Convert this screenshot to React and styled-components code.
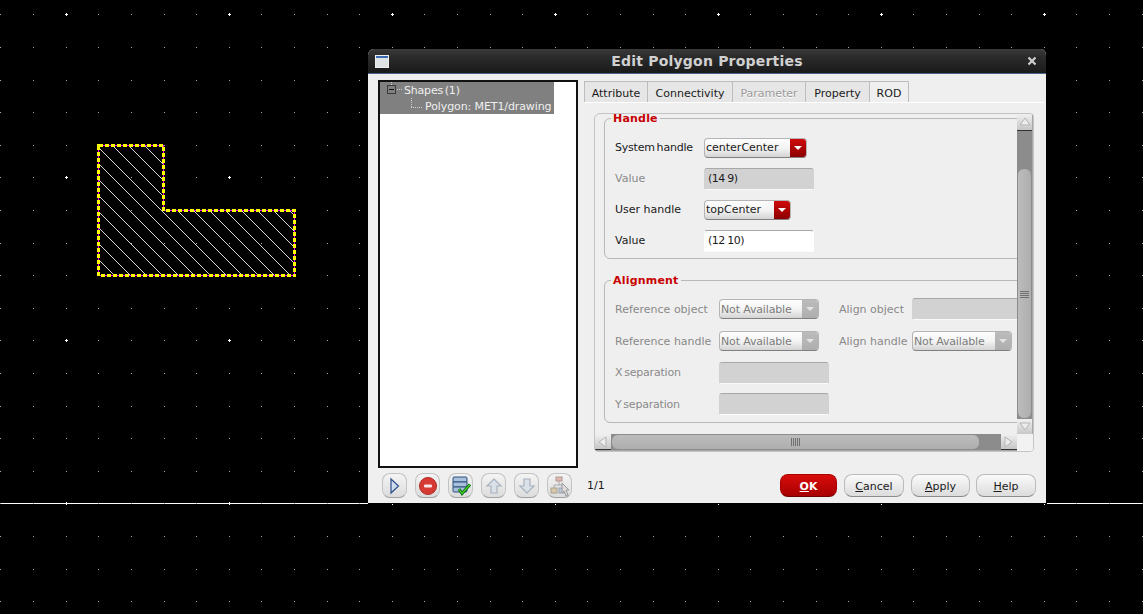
import React from 'react';
import styled, {createGlobalStyle, css} from 'styled-components';

const GlobalStyle = createGlobalStyle`
    html, body {
        margin: 0;
        padding: 0;
        background: #000;
    }
`;

const tightText = css`
    letter-spacing: -0.2px;
    word-spacing: -1.5px;
`;

const Stage = styled.div`
    position: relative;
    width: 1143px;
    height: 614px;
    overflow: hidden;
    background: #000;
    font-family: "DejaVu Sans", sans-serif;
    font-size: 11px;
    color: #1a1a1a;
`;

const CanvasSvg = styled.svg`
    position: absolute;
    left: 0;
    top: 0;
`;

const Dialog = styled.div`
    position: absolute;
    left: 368px;
    top: 49px;
    width: 679px;
    height: 455px;
    box-sizing: border-box;
    display: flex;
    flex-direction: column;
    background: #efefef;
    border-bottom: 1px solid #000;
    border-right: 1px solid #000;
    border-radius: 6px 6px 0 0;
    overflow: hidden;
`;

const TitleBar = styled.div`
    height: 24px;
    flex: none;
    display: flex;
    align-items: center;
    padding: 0 9px 0 7px;
    background: linear-gradient(#3a3a3a, #2c2c2c 30%, #1a1a1a);
    border-bottom: 1px solid #49648c;
    box-sizing: content-box;
`;

const TitleText = styled.div`
    flex: 1;
    text-align: center;
    font-size: 14px;
    font-weight: bold;
    letter-spacing: 0.2px;
    color: #d0d0d0;
    padding-right: 2px;
`;

const Body = styled.div`
    flex: 1;
    display: flex;
    padding: 7px 0 0 10px;
    min-height: 0;
`;

const TreePanel = styled.div`
    width: 200px;
    height: 388px;
    margin-top: -1px;
    flex: none;
    box-sizing: border-box;
    background: #fff;
    border: 2px solid #111;
`;

const TreeSelection = styled.div`
    width: 174px;
    background: #808080;
    color: #efefef;
`;

const TreeRow = styled.div`
    height: 16px;
    display: flex;
    align-items: center;
    padding-left: ${p => p.$indent}px;
    white-space: pre;
    letter-spacing: -0.1px;
    ${p => p.$tight && tightText}
`;

const TreeMark = styled.svg`
    flex: none;
    margin-right: ${p => p.$gap}px;
`;

const RightColumn = styled.div`
    margin-left: 6px;
    width: 460px;
    flex: none;
`;

const TabBar = styled.div`
    display: flex;
    height: 21px;
`;

const Tab = styled.div`
    width: ${p => p.$width}px;
    box-sizing: border-box;
    display: flex;
    align-items: center;
    justify-content: center;
    padding-top: 2px;
    background: ${p => p.$active ? '#efefef' : '#e6e6e6'};
    border: 1px solid #bdbdbd;
    border-left-width: ${p => p.$first ? 1 : 0}px;
    border-bottom: none;
    color: ${p => p.$disabled ? '#9a9a9a' : '#1a1a1a'};
    text-shadow: ${p => p.$disabled ? '0 1px 0 #fff' : 'none'};
`;

const TabPane = styled.div`
    border-top: 1px solid #fff;
    padding: 10px 0 0 10px;
`;

const ScrollArea = styled.div`
    width: 440px;
    height: 339px;
    box-sizing: border-box;
    display: grid;
    grid-template-columns: 422px 16px;
    grid-template-rows: 320px 17px;
    border: 1px solid #c4c4c4;
    border-radius: 6px 4px 4px 4px;
    overflow: hidden;
`;

const Viewport = styled.div`
    overflow: hidden;
    padding-left: 9px;
`;

const Group = styled.fieldset`
    width: 440px;
    margin: ${p => p.$top}px 0 0 0;
    padding: ${p => p.$padTop}px 0 ${p => p.$padBottom}px 10px;
    box-sizing: border-box;
    border: 1px solid #b8b8b8;
    border-radius: 6px;
    min-width: 0;
`;

const GroupTitle = styled.legend`
    margin-left: -4px;
    padding: 0 2px;
    font-weight: bold;
    font-size: 11px;
    line-height: 9px;
    letter-spacing: 0.2px;
    color: #c80000;
`;

const FormRow = styled.div`
    display: flex;
    align-items: center;
    height: ${p => p.$height}px;
`;

const FieldLabel = styled.div`
    width: ${p => p.$width}px;
    flex: none;
    white-space: nowrap;
    color: ${p => p.$disabled ? '#8a8a8a' : '#1a1a1a'};
    ${p => p.$tight && tightText}
`;

const Combo = styled.div`
    width: ${p => p.$width}px;
    height: 20px;
    flex: none;
    box-sizing: border-box;
    display: flex;
    border: 1px solid #b4b4b4;
    border-bottom-color: #808080;
    border-radius: 4px;
    overflow: hidden;
    background: linear-gradient(#fdfdfd, #f4f4f4 50%, #d4d4d4);
    color: ${p => p.$disabled ? '#7c7c7c' : '#1a1a1a'};
`;

const ComboText = styled.div`
    flex: 1;
    padding: ${p => p.$disabled ? 1 : 0}px 0 0 1px;
    line-height: 18px;
    white-space: nowrap;
    letter-spacing: ${p => p.$disabled ? '-0.15px' : '0'};
`;

const ComboArrow = styled.div`
    width: 16px;
    flex: none;
    display: flex;
    align-items: center;
    justify-content: center;
    background: ${p => p.$disabled ? 'linear-gradient(#bcbcbc, #aeaeae)' : 'linear-gradient(#cf0a0a, #8d0000)'};
    &::after {
        content: '';
        border-left: 4px solid transparent;
        border-right: 4px solid transparent;
        border-top: 4px solid ${p => p.$disabled ? '#e4e4e4' : '#fff'};
    }
`;

const TextField = styled.div`
    width: ${p => p.$width}px;
    height: 22px;
    flex: none;
    box-sizing: border-box;
    padding-left: 3px;
    line-height: 20px;
    background: ${p => p.$disabled ? '#d2d2d2' : '#fff'};
    border: 1px solid ${p => p.$disabled ? '#d2d2d2' : '#fff'};
    border-top-color: #a8a8a8;
    border-bottom-color: #fafafa;
    border-radius: 3px 3px 0 0;
    letter-spacing: -0.5px;
    word-spacing: -0.5px;
`;

const SideLabel = styled(FieldLabel)`
    margin-left: ${p => p.$gap}px;
`;

const VerticalTrack = styled.div`
    display: flex;
    flex-direction: column;
    background: #8c8c8c;
    border-right: 1px solid #a8a8a8;
`;

const HorizontalTrack = styled.div`
    display: flex;
    background: #8c8c8c;
    border-bottom: 1px solid #a8a8a8;
`;

const ScrollButton = styled.div`
    flex: none;
    width: ${p => p.$vertical ? 'auto' : '16px'};
    height: ${p => p.$vertical ? '16px' : 'auto'};
    display: flex;
    align-items: center;
    justify-content: center;
    background: linear-gradient(#f0f0f0, #c6c6c6);
    border-bottom: 1px solid #333;
`;

const VerticalThumb = styled.div`
    margin-top: ${p => p.$top}px;
    height: 251px;
    flex: none;
    box-sizing: border-box;
    display: flex;
    align-items: center;
    justify-content: center;
    background: linear-gradient(90deg, #bcbcbc, #aeaeae);
    border: 1px solid #8c8c8c;
    border-radius: 7px;
`;

const HorizontalThumb = styled.div`
    width: 369px;
    flex: none;
    box-sizing: border-box;
    display: flex;
    align-items: center;
    justify-content: center;
    background: linear-gradient(#bcbcbc, #aeaeae);
    border: 1px solid #8c8c8c;
    border-radius: 7px;
`;

const Grip = styled.div`
    width: 9px;
    height: 8px;
    background: repeating-linear-gradient(
        ${p => p.$vertical ? '0deg' : '90deg'},
        #6f6f6f 0 1px,
        transparent 1px 2px
    );
`;

const TrackFill = styled.div`
    flex: 1;
`;

const Corner = styled.div`
    background: #f2f2f2;
`;

const Footer = styled.div`
    height: 35px;
    flex: none;
    display: flex;
    align-items: center;
    padding-left: 14px;
`;

const ToolGroup = styled.div`
    display: flex;
    gap: 8px;
`;

const ToolButton = styled.div`
    width: 25px;
    height: 25px;
    box-sizing: border-box;
    display: flex;
    align-items: center;
    justify-content: center;
    border: 1px solid #c4c4c4;
    border-bottom-color: #a0a0a0;
    border-radius: 8px;
    background: linear-gradient(#f4f4f4, #dcdcdc);
`;

const PageCount = styled.div`
    width: 208px;
    flex: none;
    padding-left: 15px;
    box-sizing: border-box;
`;

const ActionButton = styled.div`
    width: ${p => p.$width}px;
    height: 23px;
    margin-right: ${p => p.$gap}px;
    flex: none;
    box-sizing: border-box;
    display: flex;
    align-items: center;
    justify-content: center;
    border: 1px solid ${p => p.$primary ? '#a80000' : '#bcbcbc'};
    border-bottom-color: ${p => p.$primary ? '#6d0000' : '#8c8c8c'};
    border-radius: 8px;
    background: ${p => p.$primary ? 'linear-gradient(#d80c0c, #a80000)' : 'linear-gradient(#fafafa, #dcdcdc)'};
    color: ${p => p.$primary ? '#fff' : '#1a1a1a'};
    font-weight: ${p => p.$primary ? 'bold' : 'normal'};
    padding-top: 2px;
`;

// grid of the layout editor, a major cross every fifth dot
const gridXs = [...Array(36).keys()].map(i => i - 7);
const gridYs = [...Array(20).keys()].map(i => i - 5);

const hatch = [];
for (let c = -241; c < 200; c += 16) hatch.push(c);

const outline = 'M98.5 145.5 H163.5 V210.5 H294.5 V275.5 H98.5 Z';

function Canvas() {
    return (
        <CanvasSvg width="1143" height="614" shapeRendering="crispEdges">
            <rect x="0" y="503" width="1143" height="1" fill="#fff" />
            {gridYs.map(j => gridXs.map(i => {
                const px = Math.floor(229.2 + i * 32.6);
                const py = Math.round(177.4 + j * 32.6);
                if (i % 5 === 0 && j % 5 === 0) {
                    return (
                        <path key={`${i}-${j}`} d={`M${px - 1} ${py + 0.5} h3 M${px + 0.5} ${py - 1} v3`} stroke="#fff" />
                    );
                }
                return <rect key={`${i}-${j}`} x={px} y={py} width="1" height="1" fill="#a8a8c0" />;
            }))}
            <clipPath id="shape-clip">
                <path d={outline} />
            </clipPath>
            <g clipPath="url(#shape-clip)">
                {hatch.map(c => (
                    <line key={c} x1={c + 98} y1="98" x2={c + 398} y2="398" stroke="#d8d8d8" strokeWidth="1" />
                ))}
            </g>
            <path d={outline} fill="none" stroke="#ff00ff" strokeWidth="1" />
            <path d={outline} fill="none" stroke="#ffff00" strokeWidth="3" strokeDasharray="4 2" />
        </CanvasSvg>
    );
}

const Triangle = ({dir}) => {
    const pts = {
        up: '1,9 6,2 11,9',
        down: '1,2 11,2 6,9',
        left: '9,1 9,11 2,6',
        right: '2,1 2,11 9,6',
    }[dir];
    return (
        <svg width="12" height="12" viewBox="0 0 12 12">
            <polygon points={pts} fill="#ececec" stroke="#b4b4b4" strokeWidth="1" />
        </svg>
    );
};

const WindowIcon = () => (
    <svg width="14" height="13" viewBox="0 0 14 13" style={{flex: 'none'}}>
        <rect x="0.5" y="0.5" width="13" height="12" fill="#dfe3e6" stroke="#eee" />
        <rect x="1" y="1" width="12" height="2" fill="#3a6ab0" />
    </svg>
);

const CloseIcon = () => (
    <svg width="10" height="10" viewBox="0 0 10 10" style={{flex: 'none'}}>
        <path d="M1.5 1.5 L8.5 8.5 M8.5 1.5 L1.5 8.5" stroke="#cfcfcf" strokeWidth="2.2" />
    </svg>
);

const PlayIcon = () => (
    <svg width="16" height="18" viewBox="0 0 16 18">
        <path d="M4 2 L11.5 9 L4 16 Z" fill="#cfdcee" stroke="#2c4f8c" strokeWidth="1.2" />
    </svg>
);

const StopIcon = () => (
    <svg width="20" height="20" viewBox="0 0 20 20">
        <circle cx="10" cy="10" r="8.5" fill="#d63a33" stroke="#b02a25" />
        <rect x="6" y="8.5" width="8" height="3" rx="1" fill="#f6e6e6" />
    </svg>
);

const SaveCheckIcon = () => (
    <svg width="22" height="22" viewBox="0 0 22 22">
        <rect x="3" y="2" width="14" height="5" rx="1" fill="#a9c0dc" stroke="#2c4f7c" />
        <rect x="3" y="7" width="14" height="5" fill="#a9c0dc" stroke="#2c4f7c" />
        <rect x="3" y="12" width="14" height="5" rx="1" fill="#a9c0dc" stroke="#2c4f7c" />
        <path d="M9 14 L12 18.5 L20 9.5" fill="none" stroke="#0b6a14" strokeWidth="3" />
        <path d="M9 14 L12 18.5 L20 9.5" fill="none" stroke="#4cd02c" strokeWidth="1.3" />
    </svg>
);

const ArrowIcon = ({down}) => (
    <svg width="20" height="20" viewBox="0 0 20 20" style={{transform: down ? 'rotate(180deg)' : 'none'}}>
        <path d="M10 3 L17 10 H13 V17 H7 V10 H3 Z" fill="#dbe1e8" stroke="#a8b2bd" strokeWidth="1.2" />
    </svg>
);

const TreeToolIcon = () => (
    <svg width="22" height="22" viewBox="0 0 22 22">
        <path d="M10 6 V10 M5 14 V10 H14 V14" fill="none" stroke="#a8a8a8" />
        <rect x="7" y="2" width="6" height="4" fill="#e0b8b0" stroke="#b09a94" />
        <rect x="2" y="13" width="6" height="5" fill="#d8c8a8" stroke="#a8a090" />
        <rect x="10" y="13" width="6" height="5" fill="#b8c8d8" stroke="#98a4b0" />
        <path d="M13 8 L20 15 H17 L19 20 L17 21 L15 16 L13 18 Z" fill="#dcdcdc" stroke="#9a9a9a" />
    </svg>
);

function ComboBox({width, disabled, children}) {
    return (
        <Combo $width={width} $disabled={disabled}>
            <ComboText $disabled={disabled}>{children}</ComboText>
            <ComboArrow $disabled={disabled} />
        </Combo>
    );
}

export default function App() {
    return (
        <Stage>
            <GlobalStyle />
            <Canvas />
            <Dialog>
                <TitleBar>
                    <WindowIcon />
                    <TitleText>Edit Polygon Properties</TitleText>
                    <CloseIcon />
                </TitleBar>
                <Body>
                    <TreePanel>
                        <TreeSelection>
                            <TreeRow $indent={6} $tight>
                                <TreeMark width="18" height="16" viewBox="0 0 18 16" $gap={0}>
                                    <rect x="1.5" y="3.5" width="8" height="8" fill="none" stroke="#3a3a3a" />
                                    <path d="M3 7.5 h5" stroke="#111" />
                                    <path d="M5.5 0 v3 M11 7.5 h6" stroke="#d0d0d0" strokeDasharray="1 1" />
                                </TreeMark>
                                Shapes (1)
                            </TreeRow>
                            <TreeRow $indent={30}>
                                <TreeMark width="13" height="16" viewBox="0 0 13 16" $gap={2}>
                                    <path d="M1.5 0 v9 M1 9.5 h11" stroke="#d0d0d0" strokeDasharray="1 1" />
                                </TreeMark>
                                Polygon: MET1/drawing
                            </TreeRow>
                        </TreeSelection>
                    </TreePanel>
                    <RightColumn>
                        <TabBar>
                            <Tab $width={64} $first>Attribute</Tab>
                            <Tab $width={85}>Connectivity</Tab>
                            <Tab $width={73} $disabled>Parameter</Tab>
                            <Tab $width={64}>Property</Tab>
                            <Tab $width={39} $active>ROD</Tab>
                        </TabBar>
                        <TabPane>
                            <ScrollArea>
                                <Viewport>
                                    <Group $top={0} $padTop={9} $padBottom={2}>
                                        <GroupTitle>Handle</GroupTitle>
                                        <FormRow $height={31}>
                                            <FieldLabel $width={89} $tight>System handle</FieldLabel>
                                            <ComboBox width={103}>centerCenter</ComboBox>
                                        </FormRow>
                                        <FormRow $height={31}>
                                            <FieldLabel $width={89} $disabled>Value</FieldLabel>
                                            <TextField $width={110} $disabled>(14 9)</TextField>
                                        </FormRow>
                                        <FormRow $height={31}>
                                            <FieldLabel $width={89}>User handle</FieldLabel>
                                            <ComboBox width={87}>topCenter</ComboBox>
                                        </FormRow>
                                        <FormRow $height={31}>
                                            <FieldLabel $width={89}>Value</FieldLabel>
                                            <TextField $width={110}>(12 10)</TextField>
                                        </FormRow>
                                    </Group>
                                    <Group $top={17} $padTop={8} $padBottom={2}>
                                        <GroupTitle>Alignment</GroupTitle>
                                        <FormRow $height={32}>
                                            <FieldLabel $width={104} $disabled>Reference object</FieldLabel>
                                            <ComboBox width={100} disabled>Not Available</ComboBox>
                                            <SideLabel $width={73} $gap={20} $disabled>Align object</SideLabel>
                                            <TextField $width={110} $disabled />
                                        </FormRow>
                                        <FormRow $height={32}>
                                            <FieldLabel $width={104} $disabled>Reference handle</FieldLabel>
                                            <ComboBox width={100} disabled>Not Available</ComboBox>
                                            <SideLabel $width={73} $gap={20} $disabled>Align handle</SideLabel>
                                            <ComboBox width={100} disabled>Not Available</ComboBox>
                                        </FormRow>
                                        <FormRow $height={31}>
                                            <FieldLabel $width={104} $disabled $tight>X separation</FieldLabel>
                                            <TextField $width={110} $disabled />
                                        </FormRow>
                                        <FormRow $height={32}>
                                            <FieldLabel $width={104} $disabled $tight>Y separation</FieldLabel>
                                            <TextField $width={110} $disabled />
                                        </FormRow>
                                    </Group>
                                </Viewport>
                                <VerticalTrack>
                                    <ScrollButton $vertical><Triangle dir="up" /></ScrollButton>
                                    <VerticalThumb $top={37}><Grip $vertical /></VerticalThumb>
                                    <TrackFill />
                                    <ScrollButton $vertical><Triangle dir="down" /></ScrollButton>
                                </VerticalTrack>
                                <HorizontalTrack>
                                    <ScrollButton><Triangle dir="left" /></ScrollButton>
                                    <HorizontalThumb><Grip /></HorizontalThumb>
                                    <TrackFill />
                                    <ScrollButton><Triangle dir="right" /></ScrollButton>
                                </HorizontalTrack>
                                <Corner />
                            </ScrollArea>
                        </TabPane>
                    </RightColumn>
                </Body>
                <Footer>
                    <ToolGroup>
                        <ToolButton><PlayIcon /></ToolButton>
                        <ToolButton><StopIcon /></ToolButton>
                        <ToolButton><SaveCheckIcon /></ToolButton>
                        <ToolButton><ArrowIcon /></ToolButton>
                        <ToolButton><ArrowIcon down /></ToolButton>
                        <ToolButton><TreeToolIcon /></ToolButton>
                    </ToolGroup>
                    <PageCount>1/1</PageCount>
                    <ActionButton $width={57} $gap={7} $primary><u>O</u>K</ActionButton>
                    <ActionButton $width={60} $gap={7}><u>C</u>ancel</ActionButton>
                    <ActionButton $width={59} $gap={6}><u>A</u>pply</ActionButton>
                    <ActionButton $width={60} $gap={0}><u>H</u>elp</ActionButton>
                </Footer>
            </Dialog>
        </Stage>
    );
}
